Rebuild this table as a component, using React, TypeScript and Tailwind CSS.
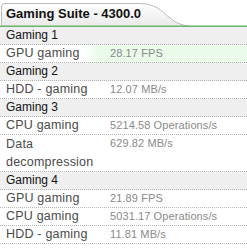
const GROUPS: { title: string; rows: { label: string; value: string; hl?: boolean }[] }[] = [
  { title: 'Gaming 1', rows: [{ label: 'GPU gaming', value: '28.17 FPS', hl: true }] },
  { title: 'Gaming 2', rows: [{ label: 'HDD - gaming', value: '12.07 MB/s' }] },
  {
    title: 'Gaming 3',
    rows: [
      { label: 'CPU gaming', value: '5214.58 Operations/s' },
      { label: 'Data decompression', value: '629.82 MB/s' },
    ],
  },
  {
    title: 'Gaming 4',
    rows: [
      { label: 'GPU gaming', value: '21.89 FPS' },
      { label: 'CPU gaming', value: '5031.17 Operations/s' },
      { label: 'HDD - gaming', value: '11.81 MB/s' },
    ],
  },
];

function Tab() {
  return (
    <div className="relative h-[27px]">
      <svg className="absolute inset-0" width="247" height="27" viewBox="0 0 247 27">
        <defs>
          <linearGradient id="tabfill" x1="0" y1="0" x2="0" y2="1">
            <stop offset="0" stopColor="#ffffff" />
            <stop offset="1" stopColor="#e9e9e9" />
          </linearGradient>
        </defs>
        <path
          d="M1.5 27 V7 Q1.5 3.5 5 3.5 H138 C156 3.5 160 10 170 18 C176 23 182 25.5 190 26"
          fill="url(#tabfill)"
          stroke="#b9b9b9"
          strokeWidth="1"
        />
        <rect x="0" y="25.5" width="247" height="1.5" fill="#6cb56c" />
      </svg>
      <div className="relative pl-[6px] pt-[6px] text-[13px] leading-[16px] font-bold text-[#111]">
        Gaming Suite - 4300.0
      </div>
    </div>
  );
}

export default function App() {
  return (
    <div
      className="w-[247px] h-[251px] bg-white overflow-hidden"
      style={{ fontFamily: '"Liberation Sans", Arial, sans-serif' }}
    >
      <Tab />
      {GROUPS.map((g) => (
        <div key={g.title}>
          <div className="h-[18px] bg-[#efefef] border-b border-dotted border-[#b5b5b5] pl-[6px] text-[12px] leading-[17px] text-[#111]">
            {g.title}
          </div>
          {g.rows.map((r, i) => (
            <div
              key={i}
              className={
                r.hl
                  ? 'flex items-start border-b border-dotted border-[#b5b5b5] bg-gradient-to-r from-white from-[34%] to-[#eafbea] to-[40%]'
                  : 'flex items-start border-b border-dotted border-[#b5b5b5]'
              }
            >
              <div
                className={
                  r.label.length > 14
                    ? 'w-[110px] shrink-0 pl-[6px] pr-1 text-[12.5px] leading-[18px] tracking-[0.2px] text-[#4a4a4a]'
                    : 'w-[110px] shrink-0 pl-[6px] pr-1 text-[12.5px] leading-[17px] tracking-[0.2px] text-[#4a4a4a]'
                }
              >
                {r.label}
              </div>
              <div className="text-[11px] leading-[17px] tracking-[0.1px] text-[#8a8a8a]">{r.value}</div>
            </div>
          ))}
        </div>
      ))}
    </div>
  );
}
